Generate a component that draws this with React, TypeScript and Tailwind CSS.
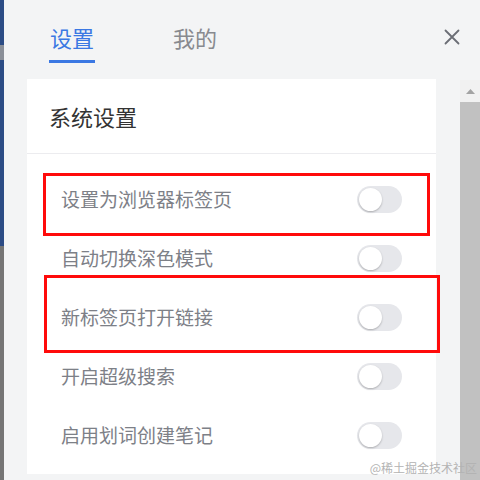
const rows = ['设置为浏览器标签页', '自动切换深色模式', '新标签页打开链接', '开启超级搜索', '启用划词创建笔记'];

const Toggle = () => (
  <div className="w-[45px] h-[27px] rounded-full bg-[#e6e7eb] p-[2px] flex items-center">
    <div className="w-[23px] h-[23px] rounded-full bg-white shadow-[0_1px_2px_rgba(0,0,0,0.25)]" />
  </div>
);

export default function App() {
  return (
    <div className="relative w-[480px] h-[480px] flex overflow-hidden bg-[#f3f4f5] font-['Noto_Sans_CJK_SC','Noto_Sans',sans-serif]">
      <div className="w-[4px] flex flex-col shrink-0">
        <div className="h-[45px] bg-[#2c4c85]" />
        <div className="h-[15px] bg-[#8a8f98]" />
        <div className="h-[186px] bg-[#2c4c85]" />
        <div className="flex-1 bg-[#757575]" />
      </div>

      <div className="flex-1 flex flex-col">
        <div className="h-[79px] flex items-start pl-[45px] pr-[20px] pt-[22px] shrink-0">
          <div className="flex flex-col items-center">
            <span className="text-[22px] leading-[30px] text-[#3b78e3]">设置</span>
            <div className="mt-[8px] w-[46px] h-[3px] bg-[#3b78e3]" />
          </div>
          <span className="ml-[78px] text-[22px] leading-[30px] text-[#888a8f]">我的</span>
          <div className="flex-1" />
          <svg className="mt-[7px]" width="16" height="16" viewBox="0 0 16 16" fill="none" stroke="#6b6e75" strokeWidth="1.8" strokeLinecap="round">
            <path d="M1.5 1.5 L14.5 14.5 M14.5 1.5 L1.5 14.5" />
          </svg>
        </div>

        <div className="flex-1 flex">
          <div className="ml-[23px] w-[409px] h-[395px] bg-white flex flex-col">
            <div className="h-[75px] flex items-center pl-[22px] text-[22px] text-[#333333] border-b border-[#ececef]">
              系统设置
            </div>
            <div className="pt-[16px] flex flex-col">
              {rows.map(r => (
                <div key={r} className="h-[59px] flex items-center pl-[34px] pr-[34px]">
                  <span className="flex-1 text-[19px] text-[#7d8087]">{r}</span>
                  <Toggle />
                </div>
              ))}
            </div>
          </div>
          <div className="flex-1" />
          <div className="w-[20px] flex flex-col mt-px">
            <div className="h-[22px] bg-[#f1f1f1] flex items-center justify-center">
              <svg width="9" height="5" viewBox="0 0 9 5"><path d="M0 5 L4.5 0 L9 5 Z" fill="#a3a3a3" /></svg>
            </div>
            <div className="flex-1 bg-[#c1c1c1]" />
          </div>
        </div>
      </div>

      <div className="absolute left-[43px] top-[173px] w-[387px] h-[63px] border-[3px] border-[#ff0a0a]" />
      <div className="absolute left-[44px] top-[275px] w-[396px] h-[78px] border-[3px] border-[#ff0a0a]" />
      <div className="absolute right-[3px] bottom-[5px] text-[12px] leading-[14px] text-[#b3b3b3]">@稀土掘金技术社区</div>
    </div>
  );
}
